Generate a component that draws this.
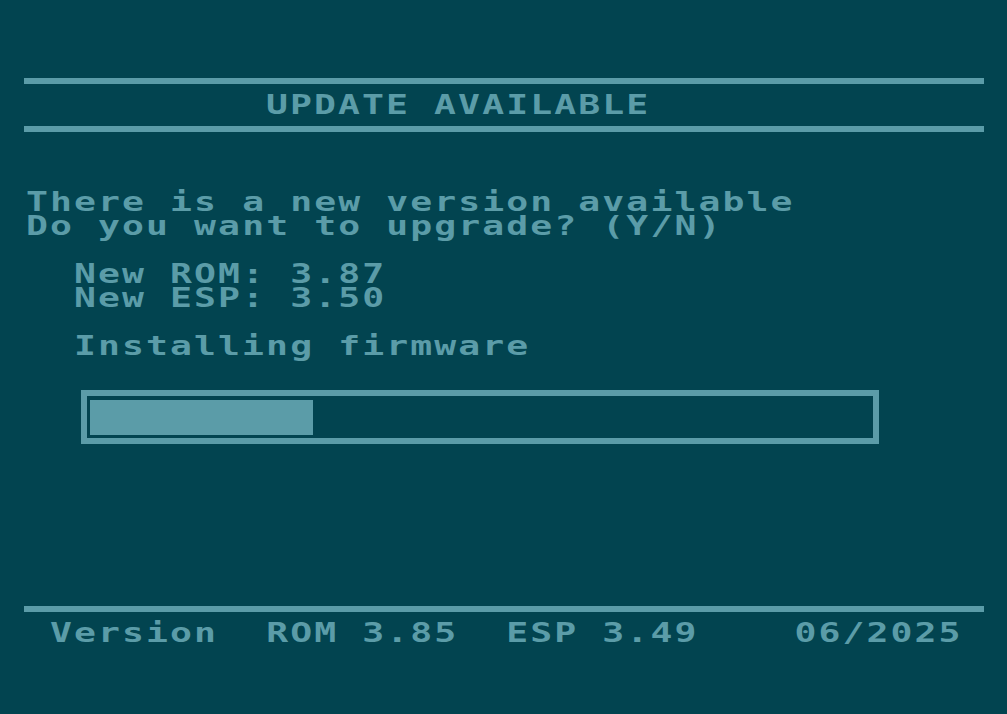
import React from "react";

const Line = ({ children, className = "" }) => (
  <div className={`h-[24px] leading-[24px] whitespace-pre ${className}`}>
    <span className="inline-block origin-left scale-x-[1.4]">{children}</span>
  </div>
);

const Rule = ({ className = "" }) => (
  <div className={`h-[6px] w-[960px] bg-[#5b9ca8] ${className}`} />
);

export default function App() {
  const progress = 223;

  return (
    <div
      className="w-full h-[714px] bg-[#024450] text-[#5b9ca8] pl-[24px] text-[26px] font-bold tracking-[1.5px] overflow-hidden"
      style={{ fontFamily: '"DejaVu Sans Mono", "Liberation Mono", monospace' }}
    >
      {/* header */}
      <Rule className="mt-[78px]" />
      <Line className="mt-[9px] pl-[242px]">UPDATE AVAILABLE</Line>
      <Rule className="mt-[9px]" />

      {/* message */}
      <div className="mt-[58px] pl-[2px]">
        <Line>There is a new version available</Line>
        <Line>Do you want to upgrade? (Y/N)</Line>
        <div className="h-[24px]" />
        <Line className="pl-[48px]">New ROM: 3.87</Line>
        <Line className="pl-[48px]">New ESP: 3.50</Line>
        <div className="h-[24px]" />
        <Line className="pl-[48px]">Installing firmware</Line>
      </div>

      {/* progress bar */}
      <div className="mt-[32px] ml-[57px] w-[798px] h-[54px] border-[6px] border-[#5b9ca8] pt-[4px] pb-[3px] px-[3px]">
        <div className="h-[35px] bg-[#5b9ca8]" style={{ width: progress }} />
      </div>

      {/* footer */}
      <Rule className="mt-[162px]" />
      <Line className="mt-[9px] pl-[2px]">{" Version  ROM 3.85  ESP 3.49    06/2025"}</Line>
    </div>
  );
}
